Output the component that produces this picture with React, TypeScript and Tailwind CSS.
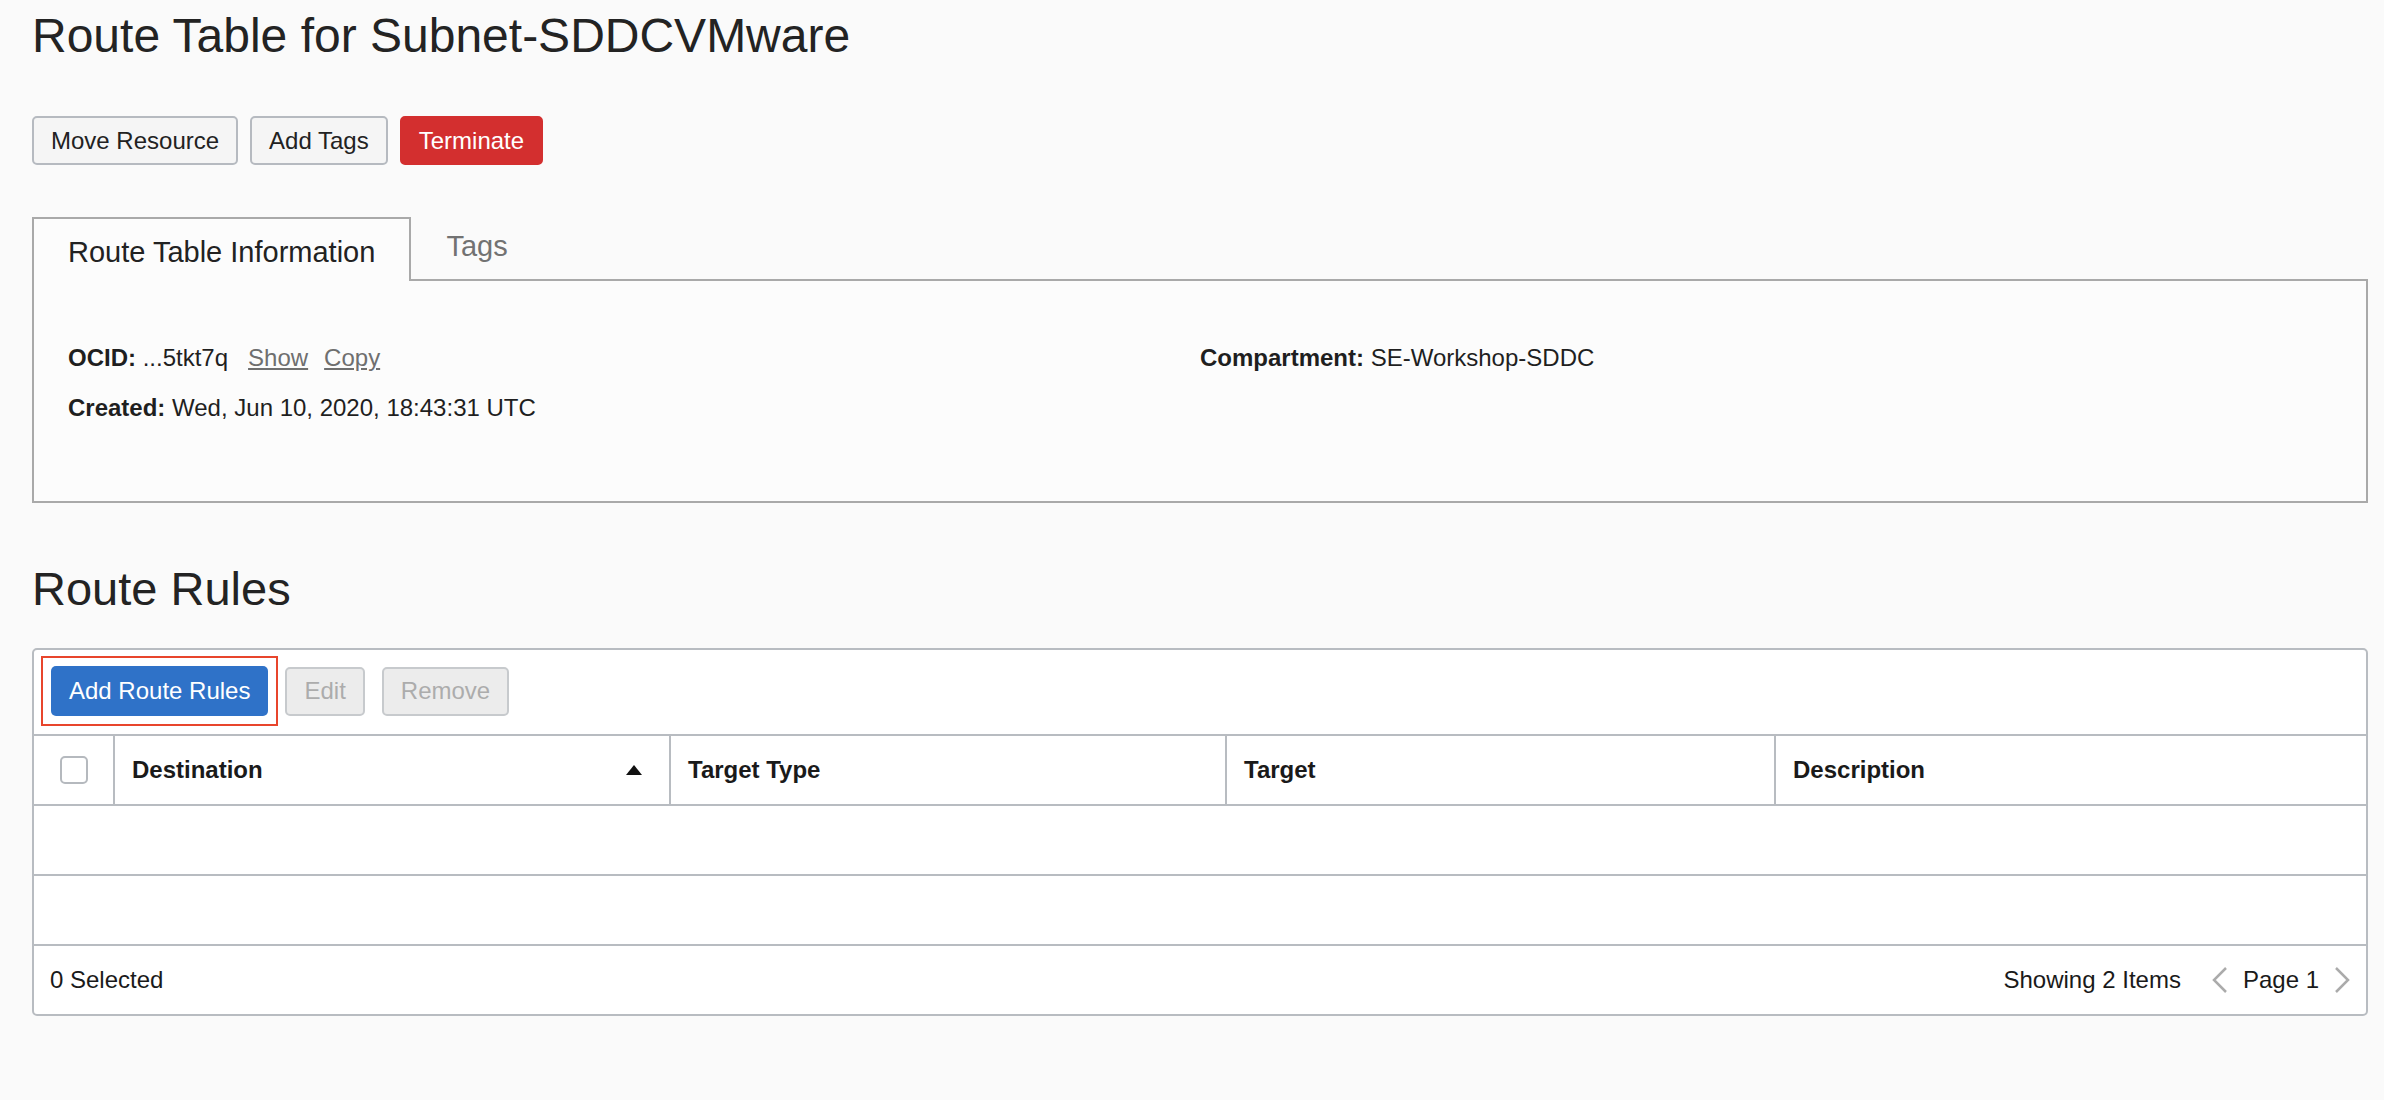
import React from 'react';

const btnBase = 'h-[49px] px-[17px] border-2 rounded-[5px] text-[24px] leading-none flex items-center';

function ChevronLeft() {
    return (
        <svg width="18" height="28" viewBox="0 0 18 28" fill="none">
            <polyline points="15,2 3,14 15,26" stroke="#ababab" strokeWidth="2.5" />
        </svg>
    );
}

function ChevronRight() {
    return (
        <svg width="18" height="28" viewBox="0 0 18 28" fill="none">
            <polyline points="3,2 15,14 3,26" stroke="#ababab" strokeWidth="2.5" />
        </svg>
    );
}

export default function App() {
    const columns = ['Target Type', 'Target', 'Description'];

    return (
        <div className="min-h-screen bg-[#fafafa] pl-[32px] pr-[16px] pb-[80px] font-['Liberation_Sans',Arial,sans-serif] text-[#1f1f1f]">
            {/* page header */}
            <h1 className="pt-[8px] text-[48px] leading-[56px] font-normal text-[#232323]">
                Route Table for Subnet-SDDCVMware
            </h1>

            <div className="mt-[52px] flex gap-[12px]">
                <button className={`${btnBase} bg-[#f5f5f5] border-[#b6bac0] text-[#222]`}>Move Resource</button>
                <button className={`${btnBase} bg-[#f5f5f5] border-[#b6bac0] text-[#222]`}>Add Tags</button>
                <button className={`${btnBase} bg-[#d32f2f] border-[#d32f2f] text-white`}>Terminate</button>
            </div>

            {/* tabs */}
            <div className="mt-[52px]">
                <div className="flex items-end">
                    <div className="h-[64px] pl-[34px] pr-[34px] pt-[6px] border-l-2 border-t-2 border-r-2 border-[#a9a9a9] bg-[#fcfcfc] flex items-center text-[29px] text-[#222]">
                        Route Table Information
                    </div>
                    <div className="flex-1 h-[64px] border-b-2 border-[#a9a9a9] pl-[35px] pb-[2px] flex items-center text-[29px] text-[#727272]">
                        Tags
                    </div>
                </div>
                <div className="h-[222px] border-2 border-t-0 border-[#a9a9a9] bg-[#fcfcfc] pl-[34px] pr-[34px] pt-[52px] grid grid-cols-2 text-[24px] leading-[50px]">
                    <div>
                        <div>
                            <span className="font-bold">OCID:</span> ...5tkt7q
                            <span className="ml-[20px] underline text-[#6f6f6f]">Show</span>
                            <span className="ml-[16px] underline text-[#6f6f6f]">Copy</span>
                        </div>
                        <div>
                            <span className="font-bold">Created:</span> Wed, Jun 10, 2020, 18:43:31 UTC
                        </div>
                    </div>
                    <div>
                        <span className="font-bold">Compartment:</span> SE-Workshop-SDDC
                    </div>
                </div>
            </div>

            {/* route rules */}
            <h2 className="mt-[58px] text-[47px] leading-[56px] font-normal text-[#232323]">Route Rules</h2>

            <div className="mt-[31px] border-2 border-[#b8bcc1] rounded-[5px] bg-white">
                <div className="flex items-center pl-[7px] pt-[6px] pb-[8px]">
                    <div className="border-2 border-[#e8452c] p-[8px]">
                        <button className="h-[50px] px-[18px] rounded-[5px] bg-[#2f72c8] text-white text-[24px] leading-none flex items-center">
                            Add Route Rules
                        </button>
                    </div>
                    <button className={`${btnBase} ml-[7px] bg-[#ececec] border-[#c7cacd] text-[#acacac]`}>Edit</button>
                    <button className={`${btnBase} ml-[17px] bg-[#ececec] border-[#c7cacd] text-[#acacac]`}>Remove</button>
                </div>

                <div className="grid grid-cols-[79px_556px_556px_549px_1fr] h-[70px] border-t-2 border-[#b8bcc1] text-[24px] font-bold text-[#1a1a1a]">
                    <div className="flex items-center justify-center">
                        <div className="w-[28px] h-[28px] border-2 border-[#b5b9be] rounded-[5px] bg-white" />
                    </div>
                    <div className="border-l-2 border-[#b8bcc1] pl-[17px] pr-[27px] flex items-center justify-between">
                        <span>Destination</span>
                        <svg width="16" height="10" viewBox="0 0 16 10">
                            <polygon points="8,0 16,10 0,10" fill="#111" />
                        </svg>
                    </div>
                    {columns.map((c) => (
                        <div key={c} className="border-l-2 border-[#b8bcc1] pl-[17px] flex items-center">
                            {c}
                        </div>
                    ))}
                </div>

                <div className="h-[70px] border-t-2 border-[#b8bcc1]" />
                <div className="h-[70px] border-t-2 border-[#b8bcc1]" />

                <div className="h-[70px] border-t-2 border-[#b8bcc1] pl-[16px] pr-[15px] flex items-center justify-between text-[24px] text-[#1a1a1a]">
                    <span>0 Selected</span>
                    <div className="flex items-center">
                        <span>Showing 2 Items</span>
                        <span className="ml-[30px]"><ChevronLeft /></span>
                        <span className="ml-[14px]">Page 1</span>
                        <span className="ml-[14px]"><ChevronRight /></span>
                    </div>
                </div>
            </div>
        </div>
    );
}
